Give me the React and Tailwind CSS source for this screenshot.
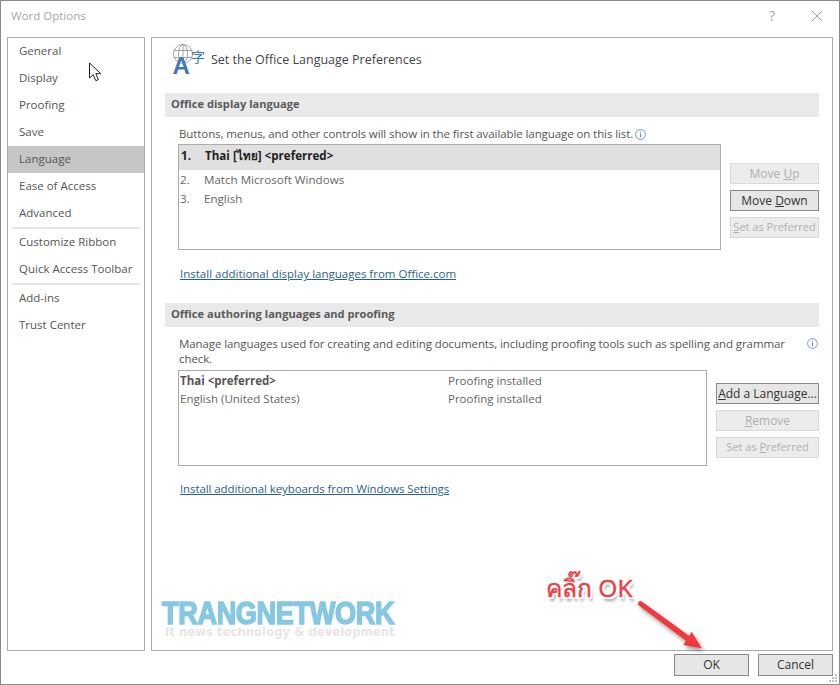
import React from 'react';

const FONT = { fontFamily: '"Open Sans", "Noto Sans", "DejaVu Sans", sans-serif' };

const SideItem = ({ children, active }) => (
    <div className={`h-[27px] pl-[11px] pb-[1px] flex items-center text-[11.5px] text-[#555] ${active ? 'bg-[#c6c6c6]' : ''}`}>{children}</div>
);

const SideRule = () => <div className="h-[2px] mx-[4px] bg-[#e6e6e6]" />;

const Info = () => (
    <svg width="11" height="11" viewBox="0 0 11 11" className="shrink-0">
        <circle cx="5.5" cy="5.5" r="4.9" fill="none" stroke="#5b8fc7" strokeWidth="0.9" />
        <rect x="5" y="2.4" width="1" height="1.1" fill="#5b8fc7" />
        <rect x="5" y="4.4" width="1" height="4" fill="#5b8fc7" />
    </svg>
);

const Btn = ({ children, disabled, small, className = '' }) => (
    <div className={`h-[21px] flex items-center justify-center border whitespace-nowrap ${small ? 'text-[11px]' : 'text-[12px]'} ${disabled ? 'border-[#d9d9d9] bg-[#ececec] text-[#b0b0b0]' : 'border-[#8a8a8a] bg-[#e6e6e6] text-[#333]'} ${className}`}>
        <span>{children}</span>
    </div>
);

const SectionHead = ({ children }) => (
    <div className="h-[24px] bg-[#e9e9e9] pl-[6px] pb-[2px] flex items-center text-[11.1px] font-bold text-[#5a5a5a]">{children}</div>
);

const LangIcon = () => (
    <svg width="33" height="33" viewBox="0 0 33 33" className="shrink-0 mt-[6px] overflow-visible">
        <g fill="none" stroke="#8f8f8f" strokeWidth="0.8">
            <circle cx="11" cy="10" r="9.5" />
            <ellipse cx="11" cy="10" rx="4.5" ry="9.5" />
            <path d="M2 6.5h18M2 13.5h18M11 0.5v19" />
        </g>
        <text x="0.5" y="30" fontSize="24" fontWeight="700" fill="#3f78b5" stroke="#fff" strokeWidth="0.6" paintOrder="stroke" fontFamily="Liberation Sans, sans-serif">A</text>
        <text x="19" y="18" fontSize="14" fill="#3878b8" fontFamily="Noto Sans CJK SC, sans-serif">字</text>
    </svg>
);

const Cursor = () => (
    <svg width="16" height="20" viewBox="0 0 16 20" className="absolute left-[87px] top-[61px]">
        <path d="M1.5 1v15l3.7-3.3 2.6 6 2.6-1.1-2.6-5.9h5z" fill="#fff" stroke="#222" strokeWidth="1" strokeLinejoin="round" />
    </svg>
);

const Arrow = () => (
    <svg width="90" height="70" viewBox="0 0 90 70" className="absolute left-[630px] top-[592px] drop-shadow-[2px_3px_2px_rgba(0,0,0,0.4)]">
        <path d="M9.7 7.7 L58.1 42.8 L60.7 38.7 L70.7 55.3 L52.3 52 L54.9 47.8 L7.3 12 Q6 9 9.7 7.7 Z" fill="#f0393f" />
    </svg>
);

const GripDots = () => (
    <svg width="10" height="10" viewBox="0 0 10 10" className="absolute right-[1px] bottom-[1px]">
        {[[7, 1], [4, 4], [7, 4], [1, 7], [4, 7], [7, 7]].map(([x, y]) => (
            <rect key={`${x}-${y}`} x={x} y={y} width="2" height="2" fill="#c4c4c4" />
        ))}
    </svg>
);

export default function App() {
    return (
        <div style={FONT} className="relative w-[840px] h-[685px] bg-white border border-[#8a8a8a] overflow-hidden flex flex-col">
            <header className="h-[36px] flex items-center justify-between pl-[10px] pr-[16px] shrink-0">
                <span className="text-[11.5px] text-[#a6a6a6] pb-[7px]">Word Options</span>
                <div className="flex items-center gap-[36px] pb-[7px]">
                    <span className="text-[14px] text-[#a6a6a6]">?</span>
                    <svg width="12" height="12" viewBox="0 0 12 12"><path d="M1 1l10 10M11 1L1 11" stroke="#a0a0a0" strokeWidth="1" fill="none" /></svg>
                </div>
            </header>

            <div className="flex gap-[6px] pl-[6px] pr-[6px] h-[614px] shrink-0">
                <nav className="w-[138px] border border-[#ababab] shrink-0">
                    <SideItem>General</SideItem>
                    <SideItem>Display</SideItem>
                    <SideItem>Proofing</SideItem>
                    <SideItem>Save</SideItem>
                    <SideItem active>Language</SideItem>
                    <SideItem>Ease of Access</SideItem>
                    <SideItem>Advanced</SideItem>
                    <SideRule />
                    <SideItem>Customize Ribbon</SideItem>
                    <SideItem>Quick Access Toolbar</SideItem>
                    <SideRule />
                    <SideItem>Add-ins</SideItem>
                    <SideItem>Trust Center</SideItem>
                </nav>

                <main className="flex-1 border border-[#ababab] pl-[13px] pr-[13px]">
                    <div className="flex items-start h-[55px] pl-[7px] gap-[6px]">
                        <LangIcon />
                        <span className="mt-[13px] leading-[18px] text-[12.5px] text-[#444]">Set the Office Language Preferences</span>
                    </div>

                    <SectionHead>Office display language</SectionHead>
                    <div className="mt-[9px] pl-[14px] pb-[2px] h-[18px] flex items-center gap-[2px] text-[11.5px] tracking-[-0.09px] text-[#555]">
                        <span>Buttons, menus, and other controls will show in the first available language on this list.</span>
                        <Info />
                    </div>
                    <div className="flex gap-[9px]">
                        <div className="ml-[13px] w-[543px] h-[106px] border border-[#ababab] text-[11.6px] text-[#666]">
                            <div className="h-[25px] bg-[#e0e0e0] flex items-center pl-[2px] pb-[3px] font-bold text-[#222]">
                                <span className="w-[24px]">1.</span><span>Thai [ไทย] &lt;preferred&gt;</span>
                            </div>
                            <div className="h-[19px] flex items-center pl-[1px]">
                                <span className="w-[24px]">2.</span><span>Match Microsoft Windows</span>
                            </div>
                            <div className="h-[19px] flex items-center pl-[1px]">
                                <span className="w-[24px]">3.</span><span>English</span>
                            </div>
                        </div>
                        <div className="w-[89px] pt-[19px] flex flex-col gap-[6px]">
                            <Btn disabled>Move <u>U</u>p</Btn>
                            <Btn>Move <u>D</u>own</Btn>
                            <Btn disabled small><u>S</u>et as Preferred</Btn>
                        </div>
                    </div>
                    <div className="mt-[15px] pl-[15px] h-[18px] flex items-center">
                        <span className="text-[11.5px] text-[#2a5f95] underline">Install additional display languages from Office.com</span>
                    </div>

                    <div className="mt-[20px]"><SectionHead>Office authoring languages and proofing</SectionHead></div>
                    <div className="mt-[9px] pl-[14px] flex justify-between items-start text-[11.5px] tracking-[-0.09px] text-[#555] leading-[15px]">
                        <span className="w-[625px]">Manage languages used for creating and editing documents, including proofing tools such as spelling and grammar check.</span>
                        <span className="pt-[2px] pr-[1px]"><Info /></span>
                    </div>
                    <div className="mt-[4px] flex gap-[9px]">
                        <div className="ml-[13px] w-[529px] h-[96px] border border-[#ababab] text-[11.5px] text-[#666]">
                            <div className="h-[19px] flex items-center pl-[1px]">
                                <span className="w-[268px] font-bold text-[#555]">Thai &lt;preferred&gt;</span><span>Proofing installed</span>
                            </div>
                            <div className="h-[19px] pb-[1px] flex items-center pl-[1px]">
                                <span className="w-[268px]">English (United States)</span><span>Proofing installed</span>
                            </div>
                        </div>
                        <div className="w-[103px] pt-[13px] flex flex-col gap-[6px]">
                            <Btn><u>A</u>dd a Language...</Btn>
                            <Btn disabled><u>R</u>emove</Btn>
                            <Btn disabled small>Set as <u>P</u>referred</Btn>
                        </div>
                    </div>
                    <div className="mt-[14px] pl-[15px] h-[18px] flex items-center">
                        <span className="text-[11.5px] tracking-[-0.1px] text-[#2a5f95] underline">Install additional keyboards from Windows Settings</span>
                    </div>
                </main>
            </div>

            <footer className="flex justify-end gap-[9px] pr-[6px] pt-[3px]">
                <Btn className="w-[75px] h-[22px]">OK</Btn>
                <Btn className="w-[75px] h-[22px]">Cancel</Btn>
            </footer>

            <GripDots />
            <Cursor />

            <div className="absolute left-[161px] top-[598px] w-[240px] whitespace-nowrap pointer-events-none">
                <div className="text-[32px] leading-[28px] font-black tracking-[-0.5px] scale-x-[0.85] origin-left text-[#86c8e2] [-webkit-text-stroke:1.5px_#86c8e2]" style={{ fontFamily: '"Liberation Sans", sans-serif' }}>TRANGNETWORK</div>
                <div className="text-[11.6px] leading-[10px] tracking-[0.05px] text-[#e6e6e6] font-bold pl-[3px]" style={{ fontFamily: '"DejaVu Sans", sans-serif' }}>It news technology &amp; development</div>
            </div>

            <Arrow />
            <div className="absolute left-[545px] top-[572px] whitespace-nowrap text-[24.5px] leading-[30px] text-[#e8434a] [-webkit-text-stroke:0.5px_#e8434a] [text-shadow:-2px_-2px_0_#fff,2px_-2px_0_#fff,-2px_2px_0_#fff,2px_2px_0_#fff,0_-2px_0_#fff,0_2px_0_#fff,-2px_0_0_#fff,2px_0_0_#fff,2px_4px_3px_#888]">คลิ๊ก OK</div>
        </div>
    );
}
